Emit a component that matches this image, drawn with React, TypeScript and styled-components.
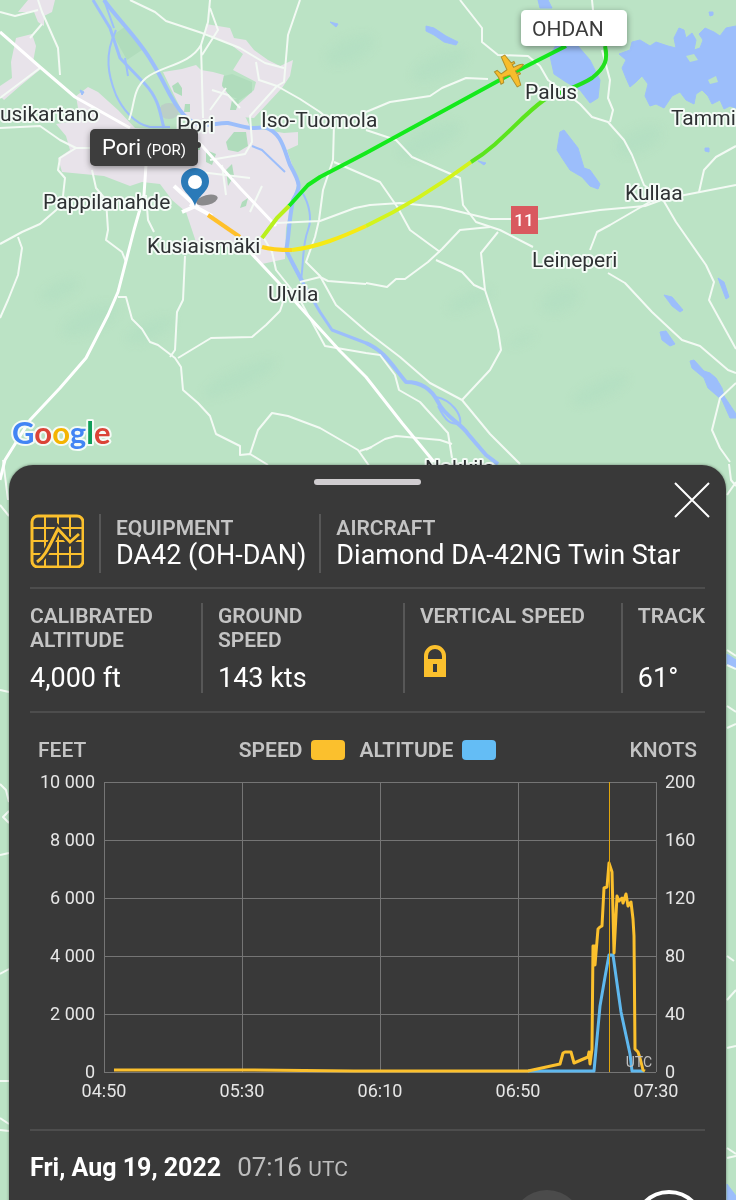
import React from "react";
import styled, { createGlobalStyle } from "styled-components";

const GlobalStyle = createGlobalStyle`
  * { box-sizing: border-box; }
  html, body { margin: 0; padding: 0; background: #bbe3c5; }
  body, button { font-family: Roboto, "Liberation Sans", sans-serif; }
`;

const Screen = styled.main`
  position: relative;
  display: flex;
  flex-direction: column;
  height: 100vh;
  padding: 465px 10px 0 9px;
  overflow: hidden;
  background: #bbe3c5;
`;

const MapCanvas = styled.svg`
  position: absolute;
  inset: 0;
  width: 100%;
  height: 100%;
  font-family: Roboto, "Liberation Sans", sans-serif;
`;

const PlaceName = styled.text`
  font-size: 21px;
  fill: #2e3133;
  stroke: #f4fbf6;
  stroke-width: 4px;
  stroke-linejoin: round;
  paint-order: stroke;
`;

const Logo = styled.text`
  font-family: Lato, sans-serif;
  font-size: 31px;
  font-weight: 700;
  stroke: #f4fbf6;
  stroke-width: 4px;
  stroke-linejoin: round;
  paint-order: stroke;
`;

const Sheet = styled.section`
  position: relative;
  flex: 1 0 auto;
  padding: 14px 21px 24px;
  border-radius: 24px 24px 0 0;
  background: #393939;
  color: #fff;
  box-shadow: 0 0 3px rgba(0, 0, 0, 0.45);
`;

const Handle = styled.div`
  width: 107px;
  height: 6px;
  margin: 0 auto;
  border-radius: 3px;
  background: #d0cdd0;
`;

const CloseButton = styled.button`
  position: absolute;
  top: 12px;
  right: 12px;
  width: 44px;
  height: 44px;
  padding: 0;
  border: 0;
  background: none;
  svg { display: block; }
`;

const Rule = styled.hr`
  height: 2px;
  margin: 0;
  border: 0;
  background: #4d4d4d;
`;

const Header = styled.header`
  display: flex;
  align-items: flex-start;
  height: 59px;
  margin: 29px 0 14px;
`;

const Field = styled.div`
  height: 100%;
  margin-left: 15px;
  padding: 2px 13px 0 15px;
  border-left: 2px solid #575757;
  & + & { margin-left: 0; }
`;

const Label = styled.div`
  font-size: 21px;
  line-height: 24px;
  font-weight: 600;
  color: #c4c4c4;
  white-space: nowrap;
`;

const Value = styled.div`
  font-size: 27px;
  line-height: 30px;
  white-space: nowrap;
`;

const Stats = styled.div`
  display: grid;
  grid-template-columns: 171fr 202fr 218fr 84fr;
  height: 90px;
  margin: 14px 0 18px;
`;

const Stat = styled.div`
  display: flex;
  flex-direction: column;
  justify-content: space-between;
  padding-top: 1px;
  & + & {
    padding-left: 15px;
    border-left: 2px solid #575757;
  }
  svg { display: block; margin-bottom: 16px; }
`;

const Legend = styled.div`
  display: grid;
  grid-template-columns: 1fr auto 1fr;
  align-items: center;
  margin: 25px 0 11px;
  padding: 0 8px;
`;

const LegendKeys = styled.div`
  display: flex;
  gap: 14px;
`;

const LegendKey = styled.div`
  display: flex;
  align-items: center;
  gap: 9px;
`;

const Swatch = styled.span<{ $color: string }>`
  width: 34px;
  height: 20px;
  border-radius: 4px;
  background: ${(p) => p.$color};
`;

const AxisUnit = styled(Label)<{ $end?: boolean }>`
  font-weight: 500;
  text-align: ${(p) => (p.$end ? "right" : "left")};
`;

const Chart = styled.div`
  display: grid;
  grid-template-columns: 74px 1fr 49px;
`;

const AxisY = styled.div<{ $side: "left" | "right" }>`
  display: flex;
  flex-direction: column;
  justify-content: space-between;
  padding: ${(p) => (p.$side === "left" ? "0 9px 0 0" : "0 0 0 9px")};
  text-align: ${(p) => (p.$side === "left" ? "right" : "left")};
`;

const Tick = styled.span`
  font-size: 18px;
  line-height: 18px;
  color: #e6e6e6;
  white-space: nowrap;
`;

const Plot = styled.div`
  position: relative;
  height: 290px;
  margin: 9px 0;
  svg { display: block; width: 100%; height: 100%; overflow: visible; }
`;

const PlotUnit = styled.span`
  position: absolute;
  right: 4px;
  bottom: 1px;
  font-size: 14px;
  line-height: 18px;
  color: #bfbfbf;
`;

const AxisX = styled.div`
  grid-column: 2;
  display: flex;
  justify-content: space-between;
  margin: 1px -30px 29px;
`;

const TimeTick = styled(Tick)`
  width: 60px;
  text-align: center;
`;

const Footer = styled.footer`
  display: grid;
  gap: 5px;
  margin-top: 20px;
`;

const DateLine = styled.div`
  display: flex;
  align-items: baseline;
  gap: 16px;
  font-size: 25px;
  line-height: 32px;
`;

const Time = styled.time`
  font-size: 26px;
  color: #bdbdbd;
  small { font-size: 21px; }
`;

const Actions = styled.div`
  display: flex;
  justify-content: flex-end;
  gap: 50px;
`;

const RoundButton = styled.button<{ $outlined?: boolean }>`
  width: 72px;
  height: 72px;
  padding: 0;
  border-radius: 50%;
  border: ${(p) => (p.$outlined ? "4px solid #fff" : "0")};
  background: ${(p) => (p.$outlined ? "transparent" : "#4b4b4b")};
`;

const WATER = "#9cbefb";
const URBAN = "#e8e3ea";
const YELLOW = "#fbc02d";

const highways = [
  "M0 32 L40 67 L75 97 L130 128 M195 138 L240 188 L276 226",
  "M250 252 L278 282 L300 307 L340 351 L366 377 L402 423 L434 462",
  "M146 165 L144 195 L134 230 L118 292 L108 315 L86 358 L60 388 L30 420 L5 460 L0 480",
];

const roads = [
  "M210 0 L208 22 L201 45 L203 118 M210 8 L218 30 L202 55",
  "M201 45 C190 65 160 66 146 78 C132 90 135 105 129 120",
  "M130 0 L155 12 L166 21 L202 33",
  "M300 0 L288 35 L284 82 L277 86 L250 116 L252 142 L245 154 L210 160",
  "M202 33 L240 48 L265 63 L284 68",
  "M256 62 L259 80 L277 86 L300 99 L320 112 L334 124 L333 160 L323 190 L319 220 L315 237 L306 262 L320 276 L336 305 L366 331",
  "M276 223 L320 221 L355 208 L370 205 L400 203 L440 207 L490 219 L540 219 L600 210 L645 206 L664 199 L700 192 L736 185",
  "M366 112 L390 102 L430 96 L442 88 L466 78 L488 79",
  "M460 0 L482 28 L482 42 L498 55 L528 56 L540 66 L548 80 L580 104 L592 117 L608 122 L624 140 L632 155 L644 185 L662 198 L676 222 L706 265 L714 282 L709 300 L736 349",
  "M592 0 L594 20 M602 50 L610 80 L608 98 L613 110 L610 122",
  "M366 130 L396 140 L412 157 L428 164 L460 178 L463 205 L476 222 L500 230 L533 247",
  "M334 162 L380 182 L398 208 L410 230 L440 252",
  "M366 331 L400 357 L430 383 L462 400 L490 434 L520 464",
  "M262 235 L272 252 L276 270 L300 300 L325 346 L366 353 L380 355 L395 375 L399 390 L420 402 L448 433 L452 458",
  "M653 200 L610 225 L597 232 L590 250 M608 273 L625 283 L652 312 L668 327 L682 340 L700 346 L728 370 L736 373",
  "M736 146 L716 157 L704 170 L699 192",
  "M736 383 L720 398 L712 430 L720 448 L730 462",
  "M498 232 L481 253 L485 290 L498 330 L501 350 L490 370 L462 400",
  "M366 283 L387 287 L396 279 L405 279 L428 262 L442 249 L460 230 L490 227",
  "M436 260 L462 272 L474 285 L485 290",
  "M366 450 L385 439 L396 436 L440 440 L452 444",
  "M300 282 L320 277 L328 281 L366 284",
  "M118 297 L126 297 L132 319 L142 329 L150 342 L158 345 L175 358 L181 367 L183 390 L198 403 L210 416 L216 434 L240 446 L240 455 L250 454 L268 465",
  "M178 358 L211 338 L252 337 L266 325 L280 311 L284 299",
  "M185 256 L183 300 L177 312 L175 350 L170 357",
  "M250 454 L258 430 L272 413 L288 416 L320 428 L358 450 L372 470 M360 451 L372 447",
  "M38 0 L42 12 L58 48 L60 75 M42 24 L30 38 M0 98 L40 68 M0 12 L15 16 L38 10",
  "M0 128 L40 126 L60 140 L76 148 L110 148 M76 148 L60 158 L58 170 L65 178 L62 205 L40 224 L22 232 L0 244 M18 237 L22 248 L18 275 L8 300 L0 318",
  "M92 170 L96 188 L106 200 L108 230 L106 240 L122 252 L126 262 M146 195 L148 220 L154 232",
  "M200 172 L250 178 M222 165 L226 195 M262 186 L250 212 M226 88 L210 110 M212 90 L228 95 L240 108",
  "M3 460 L8 500 M0 505 L9 516 M0 690 L9 692 M0 784 L6 790 L9 802 M9 811 L3 817 L9 823 M0 855 L9 853 M0 974 L9 969 M0 1081 L9 1081 M0 1118 L9 1124 M0 1130 L9 1131",
  "M727 495 L736 482 M729 464 L731 480 L736 486 M727 650 L736 656 M727 665 L736 669 M727 706 L736 712 M727 728 L736 724 M727 956 L734 961 M727 1000 L736 990 M727 1048 L736 1046 M727 1148 L736 1154 M727 1158 L736 1156",
];

const rivers = [
  { d: "M104 0 C120 22 138 38 152 62 C168 88 170 100 184 115 C200 132 214 122 228 123 C242 126 250 130 264 127 C282 132 284 150 290 165 C302 186 300 188 293 200 C288 225 289 240 286 250 L292 262 L302 281", w: 4 },
  { d: "M93 0 L110 28 L120 58 L145 84 C160 100 160 115 164 128", w: 3 },
  { d: "M116 30 C104 55 108 75 116 95 C122 108 134 124 150 127 L170 127", w: 2 },
  { d: "M104 0 L114 28 M125 58 L128 76 M252 146 L262 150 L285 172", w: 2 },
  { d: "M292 262 L302 281 L320 312 L332 330 L366 343 L378 350", w: 3 },
  { d: "M366 343 C384 350 394 368 406 382 C422 382 432 390 438 402 C444 416 462 424 468 434 L486 455 L498 464", w: 4 },
  { d: "M436 397 C452 400 462 415 460 424 M438 406 C446 422 450 424 460 424 M302 192 C310 205 312 220 308 230 C302 246 304 260 301 280", w: 2 },
];

const urban = [
  "M18 12 L28 0 L55 0 L52 12 L44 16 L44 26 L38 22 L34 12 Z",
  "M16 38 L32 34 L36 46 L33 62 L42 68 L20 86 L4 100 L0 96 L0 86 L12 78 L11 62 Z",
  "M56 124 L80 120 L76 96 L88 87 L98 92 L118 110 L135 128 L172 130 L190 128 L184 115 L174 95 L163 72 L182 69 L196 65 L201 70 L213 72 L224 75 L222 84 L232 100 L246 118 L250 127 L266 130 L284 133 L298 132 L298 145 L287 150 L298 182 L291 205 L286 228 L285 259 L262 264 L250 250 L196 242 L186 212 L172 200 L160 184 L142 182 L130 186 L104 176 L62 172 L58 158 L70 150 L66 136 Z",
  "M206 24 L230 28 L234 38 L246 40 L254 50 L268 60 L280 66 L293 60 L290 76 L282 88 L254 118 L240 117 L234 108 L254 90 L256 82 L233 70 L243 54 L230 44 L205 33 Z",
];

const groves = [
  "M113 35 L126 26 L142 50 L127 60 Z",
  "M172 86 L178 82 L182 88 L182 96 L174 92 Z",
  "M185 104 L190 104 L190 112 L184 112 Z",
  "M232 100 L240 98 L236 110 L230 110 Z",
  "M226 142 L234 132 L246 132 L248 146 L238 152 L228 150 Z",
  "M206 150 L216 154 L212 165 L206 162 Z",
  "M226 170 L232 164 L234 176 L228 186 Z",
  "M242 202 L248 198 L246 206 L240 208 Z",
  "M224 76 L232 74 L252 82 L252 92 L240 100 L230 96 L222 86 Z",
  "M196 145 L200 142 L200 150 L196 150 Z",
];

const lakes = [
  "M538 0 L548 0 L552 8 L540 8 Z",
  "M550 56 L556 45 L578 46 L590 60 L600 80 L598 98 L590 103 L580 90 L566 82 L554 74 Z",
  "M426 26 L434 28 L446 36 L458 42 L456 45 L444 42 L434 35 L426 31 Z",
  "M560 132 L564 130 L578 148 L584 168 L590 170 L600 184 L598 189 L590 186 L582 177 L570 170 L562 158 L557 150 Z",
  "M619 54 L630 50 L632 42 L640 40 L650 46 L656 42 L668 46 L676 48 L674 38 L679 28 L684 30 L686 38 L692 33 L696 40 L694 50 L700 48 L703 40 L699 34 L705 28 L714 32 L720 36 L726 28 L736 26 L736 108 L730 106 L724 109 L720 100 L712 104 L708 96 L702 90 L696 94 L694 104 L686 100 L680 92 L672 96 L664 108 L656 104 L650 106 L645 96 L648 84 L642 76 L636 82 L630 87 L626 78 L622 68 L626 60 Z",
  "M664 295 L672 297 L683 310 L680 312 L672 306 Z",
  "M660 332 L666 331 L675 344 L670 346 L662 340 Z",
  "M690 361 L694 360 L704 371 L710 373 L716 378 L722 388 L724 396 L736 414 L736 418 L730 418 L722 400 L708 388 L704 378 L692 368 Z",
  "M718 278 L724 282 L729 297 L726 299 Z",
  "M330 22 L338 24 L336 27 Z",
  "M709 12 L713 12 L713 15 L710 16 Z M705 148 L709 148 L709 152 L705 151 Z M478 161 L486 163 L484 165 Z M80 90 L84 92 L82 95 Z",
  "M727 654 L736 660 L736 668 L727 665 Z",
  "M727 1184 L736 1196 L736 1200 L727 1200 Z",
];

const islands = "M686 56 L694 54 L698 60 L690 62 Z M708 80 L716 76 L718 82 L710 84 Z";

const hills = [
  [150, 330, 26, 9], [240, 378, 40, 10], [90, 320, 30, 12], [522, 340, 14, 4],
  [440, 65, 30, 12], [560, 300, 20, 12], [600, 390, 30, 9], [430, 140, 34, 12],
  [640, 140, 24, 12], [350, 50, 26, 12], [60, 290, 20, 8], [470, 300, 24, 8],
];

const places: { name: string; x: number; y: number; anchor?: "end" }[] = [
  { name: "usikartano", x: 99, y: 121, anchor: "end" },
  { name: "Pori", x: 177, y: 132 },
  { name: "Iso-Tuomola", x: 261, y: 127 },
  { name: "Pappilanahde", x: 43, y: 209 },
  { name: "Kusiaismäki", x: 147, y: 253 },
  { name: "Ulvila", x: 268, y: 301 },
  { name: "Palus", x: 525, y: 99 },
  { name: "Tammi", x: 671, y: 125 },
  { name: "Kullaa", x: 625, y: 200 },
  { name: "Leineperi", x: 532, y: 267 },
  { name: "Nokkila", x: 425, y: 475 },
];

const track = [
  { d: "M208 215 L240 237", c: "#ffc02a" },
  { d: "M262 247 C272 250 282 250 292 250", c: "#ffd21c" },
  { d: "M292 250 C318 247 342 237 366 226", c: "#f6ea14" },
  { d: "M366 226 C404 208 436 188 471 162", c: "#d3f41c" },
  { d: "M471 162 C502 143 520 117 544 100", c: "#5be51c" },
  { d: "M544 100 C560 92 580 86 592 78 C606 67 608 59 605 46", c: "#22e01e" },
  { d: "M566 46 L509 75 L366 153 L320 177 L308 185 L289 206", c: "#14ea1c" },
  { d: "M289 206 L277 218 L262 238", c: "#b9f01c" },
];

function FlightMap() {
  return (
    <MapCanvas viewBox="0 0 736 1200" preserveAspectRatio="xMinYMin slice" aria-label="Flight map">
      <defs>
        <filter id="tagShadow" x="-20%" y="-30%" width="140%" height="180%">
          <feDropShadow dx="0" dy="2" stdDeviation="3" floodOpacity="0.4" />
        </filter>
        <filter id="soft" x="-50%" y="-50%" width="200%" height="200%">
          <feGaussianBlur stdDeviation="5" />
        </filter>
      </defs>
      <rect width="736" height="1200" fill="#bbe3c5" />
      <g fill="#acdcc0" opacity="0.35" filter="url(#soft)">
        {hills.map(([x, y, rx, ry], i) => (
          <ellipse key={i} cx={x} cy={y} rx={rx} ry={ry} transform={`rotate(-25 ${x} ${y})`} />
        ))}
      </g>
      <g fill={URBAN}>{urban.map((d) => <path key={d} d={d} />)}</g>
      <g fill="#b0dcbc">{groves.map((d) => <path key={d} d={d} />)}</g>
      <ellipse cx="169" cy="111" rx="10" ry="8" fill="#bccfc6" />
      <g fill={WATER} stroke={WATER} strokeLinejoin="round">{lakes.map((d) => <path key={d} d={d} />)}</g>
      <path d={islands} fill="#bbe3c5" />
      <g fill="none" stroke={WATER} strokeLinejoin="round">
        {rivers.map((r) => <path key={r.d} d={r.d} strokeWidth={r.w} />)}
      </g>
      <g fill="none" stroke="#f3faf4" strokeLinejoin="round">
        {roads.map((d) => <path key={d} d={d} strokeWidth="2" />)}
        {highways.map((d) => <path key={d} d={d} strokeWidth="3" stroke="#fff" />)}
      </g>
      <path d="M174 186 L196 206 L182 212 M190 204 L212 216" fill="none" stroke="#fff" strokeWidth="4" />
      <g fill="none" strokeWidth="4" strokeLinejoin="round">
        {track.map((t) => <path key={t.d} d={t.d} stroke={t.c} />)}
      </g>
      <rect x="511" y="206" width="27" height="28" fill="#d9595f" />
      <text x="524" y="226" fontSize="17" fontWeight="500" fill="#fff" textAnchor="middle">11</text>
      {places.map((p) => (
        <PlaceName key={p.name} x={p.x} y={p.y} textAnchor={p.anchor}>{p.name}</PlaceName>
      ))}
      <g transform="translate(511 71) rotate(62)">
        <path
          d="M0 -14 C2 -12 2 -8 2 -4 L5 -4 L5 -7 L7 -7 L7 -4 L17 -2 L17 2 L3 3 L2 10 L7 12 L7 15 L0 14 L-7 15 L-7 12 L-2 10 L-3 3 L-17 2 L-17 -2 L-7 -4 L-7 -7 L-5 -7 L-5 -4 L-2 -4 C-2 -8 -2 -12 0 -14 Z"
          fill="#f7bd2c" stroke="#b08f2a" strokeWidth="1"
        />
      </g>
      <ellipse cx="207" cy="200" rx="11" ry="5" fill="#8a8a8c" transform="rotate(-14 207 200)" />
      <path d="M195 206 C192 195 181 192 181 181 A14 13 0 0 1 209 181 C209 192 198 195 195 206 Z" fill="#2a7ab8" />
      <circle cx="195" cy="182" r="7" fill="#fff" />
      <circle cx="198" cy="145" r="3" fill="#444" />
      <g filter="url(#tagShadow)">
        <rect x="90" y="129" width="108" height="37" rx="5" fill="#3d3d3d" />
        <rect x="521" y="10" width="106" height="36" rx="5" fill="#fff" />
      </g>
      <text x="102" y="155" fontSize="22" fill="#fff">Pori <tspan fontSize="15">(POR)</tspan></text>
      <text x="532" y="36" fontSize="21" fill="#3b3b3b">OHDAN</text>
      <Logo x="12" y="444">
        <tspan fill="#4285f4">G</tspan><tspan fill="#db4437">o</tspan><tspan fill="#f4b400">o</tspan>
        <tspan fill="#4285f4">g</tspan><tspan fill="#0f9d58">l</tspan><tspan fill="#db4437">e</tspan>
      </Logo>
    </MapCanvas>
  );
}

function ChartIcon() {
  return (
    <svg width="54" height="54" viewBox="0 0 54 54" fill="none" stroke={YELLOW}>
      <path d="M15 2V52M28 2V52M40 2V52M2 14H52M2 27H52M2 40H52" strokeWidth="2" />
      <path d="M7 48C16 42 20 30 28 15L40 28L49 20" stroke="#393939" strokeWidth="7" />
      <path d="M7 48C16 42 20 30 28 15L40 28L49 20" strokeWidth="3" />
      <rect x="2" y="2" width="51" height="51" rx="6" strokeWidth="3" />
    </svg>
  );
}

function LockIcon() {
  return (
    <svg width="30" height="32" viewBox="0 0 30 32" role="img" aria-label="Locked">
      <path d="M6 17V11a9 9 0 0 1 18 0V17" fill="none" stroke={YELLOW} strokeWidth="4" />
      <path d="M4 14H26V32H4Z" fill={YELLOW} />
      <rect x="13" y="19" width="4" height="8" fill="#393939" />
    </svg>
  );
}

const feetTicks = ["10 000", "8 000", "6 000", "4 000", "2 000", "0"];
const knotTicks = ["200", "160", "120", "80", "40", "0"];
const timeTicks = ["04:50", "05:30", "06:10", "06:50", "07:30"];

const altitude = "424,289 490,289 496,224 501,195 505,173 509,173 517,230 526,272 528,289 540,289";
const speed =
  "10,288 140,288 250,289 424,289 456,282 459,271 461,270 467,270 470,281 484,275 485,270 486,282 488,267 489,164 491,164 491,183 494,147 496,145 498,144 500,106 503,105 505,81 508,90 510,171 513,114 515,119 518,116 519,121 522,112 524,124 527,120 529,137 530,154 531,267 534,270 536,276 539,288 541,289";

export default function App() {
  return (
    <>
      <GlobalStyle />
      <Screen>
        <FlightMap />
        <Sheet>
          <Handle />
          <CloseButton aria-label="Close">
            <svg width="44" height="44" viewBox="0 0 44 44" stroke="#fff" strokeWidth="2">
              <path d="M5 6L39 40M39 6L5 40" />
            </svg>
          </CloseButton>

          <Header>
            <ChartIcon />
            <Field>
              <Label>EQUIPMENT</Label>
              <Value>DA42 (OH-DAN)</Value>
            </Field>
            <Field>
              <Label>AIRCRAFT</Label>
              <Value>Diamond DA-42NG Twin Star</Value>
            </Field>
          </Header>
          <Rule />

          <Stats>
            <Stat>
              <Label>CALIBRATED<br />ALTITUDE</Label>
              <Value>4,000 ft</Value>
            </Stat>
            <Stat>
              <Label>GROUND<br />SPEED</Label>
              <Value>143 kts</Value>
            </Stat>
            <Stat>
              <Label>VERTICAL SPEED</Label>
              <LockIcon />
            </Stat>
            <Stat>
              <Label>TRACK</Label>
              <Value>61°</Value>
            </Stat>
          </Stats>
          <Rule />

          <Legend>
            <AxisUnit>FEET</AxisUnit>
            <LegendKeys>
              <LegendKey><Label>SPEED</Label><Swatch $color={YELLOW} /></LegendKey>
              <LegendKey><Label>ALTITUDE</Label><Swatch $color="#64bdf5" /></LegendKey>
            </LegendKeys>
            <AxisUnit $end>KNOTS</AxisUnit>
          </Legend>

          <Chart>
            <AxisY $side="left">{feetTicks.map((t) => <Tick key={t}>{t}</Tick>)}</AxisY>
            <Plot>
              <svg viewBox="0 0 552 290" preserveAspectRatio="none" fill="none" strokeLinejoin="round">
                <path
                  d="M0 0H552M0 58H552M0 116H552M0 174H552M0 232H552M0 290H552M0 0V290M138 0V290M276 0V290M414 0V290M552 0V290"
                  stroke="#757575" strokeWidth="1" shapeRendering="crispEdges"
                />
                <polyline points={altitude} stroke="#5fb8ee" strokeWidth="3" />
                <polyline points={speed} stroke={YELLOW} strokeWidth="3" />
                <rect x="505" y="0" width="1" height="290" fill="#e0a50c" />
              </svg>
              <PlotUnit>UTC</PlotUnit>
            </Plot>
            <AxisY $side="right">{knotTicks.map((t) => <Tick key={t}>{t}</Tick>)}</AxisY>
            <AxisX>{timeTicks.map((t) => <TimeTick key={t}>{t}</TimeTick>)}</AxisX>
          </Chart>
          <Rule />

          <Footer>
            <DateLine>
              <strong>Fri, Aug 19, 2022</strong>
              <Time dateTime="07:16">07:16 <small>UTC</small></Time>
            </DateLine>
            <Actions>
              <RoundButton aria-label="Stop" />
              <RoundButton $outlined aria-label="Play" />
            </Actions>
          </Footer>
        </Sheet>
      </Screen>
    </>
  );
}
